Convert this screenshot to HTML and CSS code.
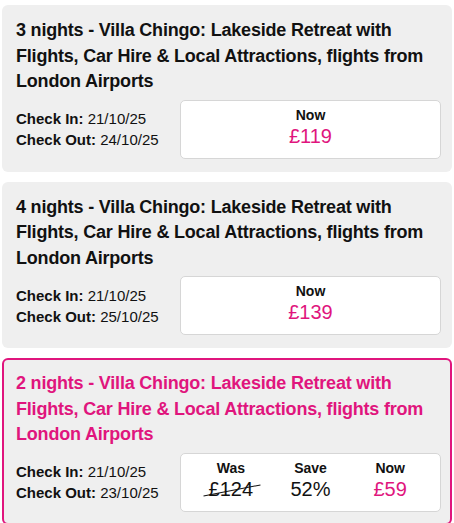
FILE: index.html
```html
<!DOCTYPE html>
<html lang="en">
<head>
<meta charset="utf-8">
<link rel="stylesheet" href="styles.css">
</head>
<body>
<div class="list">
  <div class="card">
    <h2 class="title">3 nights - Villa Chingo: Lakeside Retreat with Flights, Car Hire &amp; Local Attractions, flights from London Airports</h2>
    <div class="row">
      <div class="dates">
        <div><b>Check In:</b> 21/10/25</div>
        <div><b>Check Out:</b> 24/10/25</div>
      </div>
      <div class="pricebox">
        <div class="col">
          <div class="label">Now</div>
          <div class="value now">£119</div>
        </div>
      </div>
    </div>
  </div>
  <div class="card">
    <h2 class="title">4 nights - Villa Chingo: Lakeside Retreat with Flights, Car Hire &amp; Local Attractions, flights from London Airports</h2>
    <div class="row">
      <div class="dates">
        <div><b>Check In:</b> 21/10/25</div>
        <div><b>Check Out:</b> 25/10/25</div>
      </div>
      <div class="pricebox">
        <div class="col">
          <div class="label">Now</div>
          <div class="value now">£139</div>
        </div>
      </div>
    </div>
  </div>
  <div class="card selected">
    <h2 class="title">2 nights - Villa Chingo: Lakeside Retreat with Flights, Car Hire &amp; Local Attractions, flights from London Airports</h2>
    <div class="row">
      <div class="dates">
        <div><b>Check In:</b> 21/10/25</div>
        <div><b>Check Out:</b> 23/10/25</div>
      </div>
      <div class="pricebox multi">
        <div class="col">
          <div class="label">Was</div>
          <div class="value was"><span class="strike">£124</span></div>
        </div>
        <div class="col">
          <div class="label">Save</div>
          <div class="value">52%</div>
        </div>
        <div class="col">
          <div class="label">Now</div>
          <div class="value now">£59</div>
        </div>
      </div>
    </div>
  </div>
</div>
</body>
</html>
```
FILE: styles.css
```css
html, body {
  margin: 0;
  padding: 0;
  background: #ffffff;
}
body {
  font-family: "Liberation Sans", Arial, sans-serif;
  color: #111;
}
.list {
  display: flex;
  flex-direction: column;
  gap: 10px;
  padding: 5px 2px 0 2px;
}
.card {
  background: #efefef;
  border-radius: 6px;
  padding: 13px 11px 13px 14px;
}
.card.selected {
  border: 2px solid #e0157d;
  padding: 11px 9px 11px 12px;
}
.title {
  margin: 0;
  font-size: 18px;
  line-height: 25.5px;
  letter-spacing: -0.2px;
  font-weight: bold;
  color: #111;
}
.selected .title {
  color: #e0157d;
}
.row {
  display: flex;
  align-items: center;
  margin-top: 5px;
}
.dates {
  flex: 1;
  font-size: 15px;
  line-height: 21px;
}
.pricebox {
  width: 261px;
  box-sizing: border-box;
  height: 59px;
  background: #fff;
  border: 1px solid #d6d6d6;
  border-radius: 5px;
  display: flex;
  padding: 5px 0 0 0;
}
.pricebox.multi {
  padding: 5px 10px 0 10px;
}
.col {
  flex: 1;
  display: flex;
  flex-direction: column;
  align-items: center;
}
.label {
  font-size: 14px;
  font-weight: bold;
  line-height: 18px;
}
.value {
  font-size: 20px;
  line-height: 24px;
  margin-top: 0;
}
.now {
  color: #e0157d;
}
.strike {
  position: relative;
  display: inline-block;
}
.strike::after {
  content: "";
  position: absolute;
  left: -6px;
  right: -7px;
  top: 13px;
  height: 1px;
  background: #111;
  transform: rotate(-11deg);
}
```
